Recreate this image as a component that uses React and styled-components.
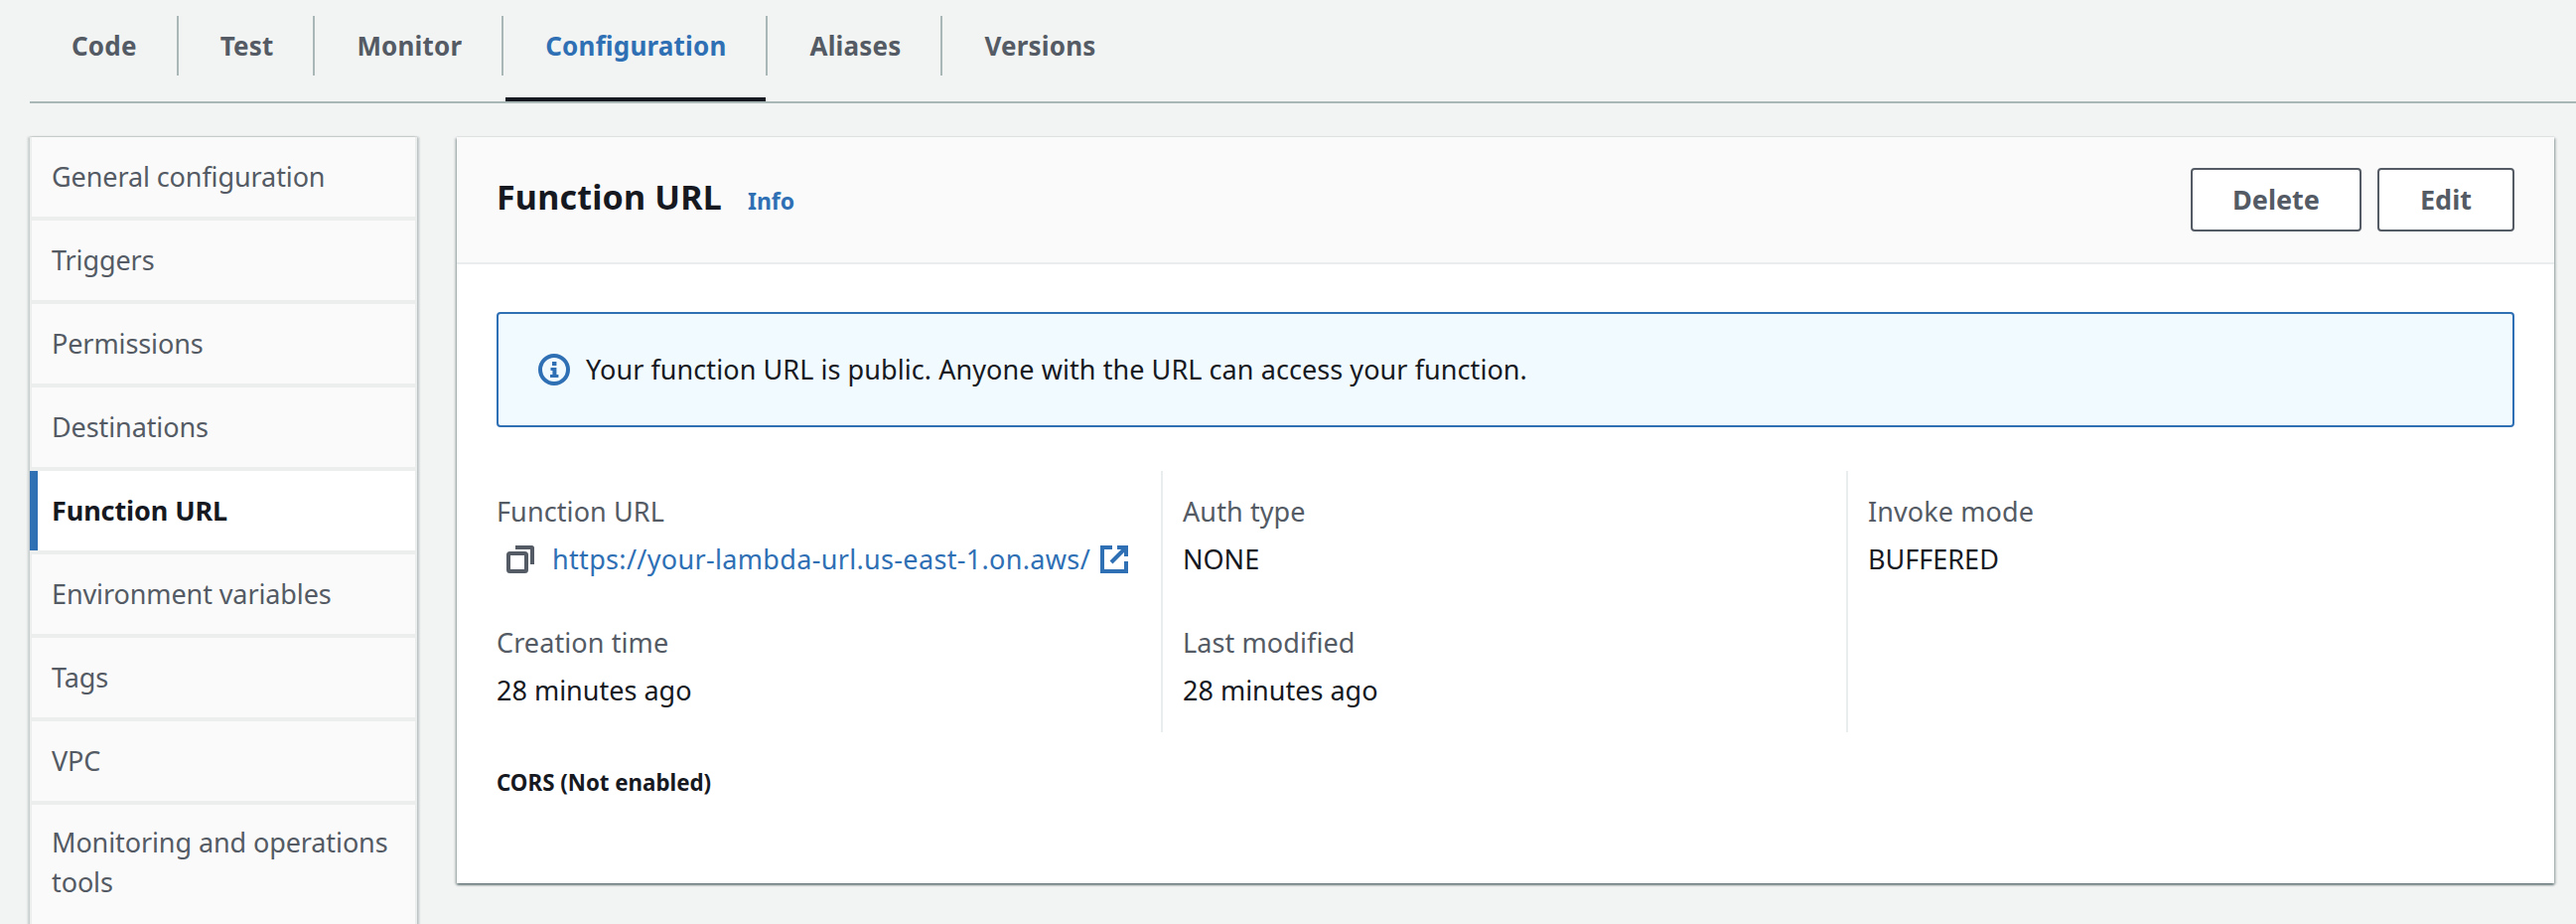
import React from "react";
import styled, { createGlobalStyle } from "styled-components";

const BLUE = "#2f70b5";
const GREY = "#545b64";
const INK = "#16191f";

const Global = createGlobalStyle`
  html, body { margin: 0; padding: 0; background: #f2f4f3; }
  body { font-family: "Noto Sans", "Open Sans", sans-serif; color: ${INK}; -webkit-font-smoothing: antialiased; }
`;

const Page = styled.div`
  width: 2594px;
  height: 930px;
  overflow: hidden;
  padding: 16px 0 0 30px;
  box-sizing: border-box;
`;

const TabBar = styled.div`
  display: flex;
  height: 86px;
  border-bottom: 2px solid #a9b7b6;
`;

const Tab = styled.div`
  position: relative;
  height: 60px;
  display: flex;
  align-items: center;
  padding: 0 40px 0 42px;
  font-size: 26px;
  font-weight: 700;
  letter-spacing: 0.18px;
  color: ${(p) => (p.$active ? BLUE : GREY)};
  border-right: ${(p) => (p.$last ? "none" : "2px solid #a9b7b6")};

  ${(p) =>
    p.$active &&
    `&::after {
      content: "";
      position: absolute;
      left: 2px;
      right: 0;
      top: 82px;
      height: 4px;
      background: ${INK};
    }`}
`;

const Body = styled.div`
  display: grid;
  grid-template-columns: 390px 2112px;
  column-gap: 40px;
  align-items: start;
  margin-top: 34px;
`;

const Nav = styled.nav`
  display: flex;
  flex-direction: column;
  gap: 4px;
  background: #eceeee;
  padding: 0 2px;
  box-shadow: 2px 0 2px rgba(0, 28, 36, 0.22), -2px 0 2px rgba(0, 28, 36, 0.18), 0 -1px 1px rgba(0, 28, 36, 0.06);
  height: 800px;
`;

const NavItem = styled.div`
  position: relative;
  min-height: ${(p) => (p.$tall ? 130 : 80)}px;
  box-sizing: border-box;
  display: flex;
  align-items: ${(p) => (p.$tall ? "flex-start" : "center")};
  padding: ${(p) => (p.$tall ? "18px 20px 0" : "0 20px 1px")};
  background: ${(p) => (p.$active ? "#ffffff" : "#fafafa")};
  font-size: 27px;
  line-height: 40px;
  letter-spacing: -0.1px;
  color: ${(p) => (p.$active ? INK : GREY)};
  font-weight: ${(p) => (p.$active ? 700 : 400)};

  ${(p) =>
    p.$active &&
    `&::before {
      content: "";
      position: absolute;
      left: -2px;
      top: 0;
      bottom: 0;
      width: 8px;
      background: ${BLUE};
    }`}
`;

const Panel = styled.section`
  background: #ffffff;
  height: 751px;
  box-shadow: 0 2px 2px rgba(0, 28, 36, 0.45), 2px 1px 2px rgba(0, 28, 36, 0.18), -2px 1px 2px rgba(0, 28, 36, 0.18), 0 -1px 1px rgba(0, 28, 36, 0.06);
`;

const PanelHeader = styled.header`
  display: flex;
  align-items: center;
  justify-content: space-between;
  height: 128px;
  box-sizing: border-box;
  padding: 0 40px;
  background: #fafafa;
  border-bottom: 2px solid #eaeded;
`;

const TitleRow = styled.div`
  display: flex;
  align-items: baseline;
  gap: 26px;
  padding-bottom: 6px;
`;

const Title = styled.h2`
  margin: 0;
  font-size: 34px;
  font-weight: 700;
  letter-spacing: 0.2px;
  color: ${INK};
`;

const InfoLink = styled.span`
  font-size: 23px;
  font-weight: 700;
  color: ${BLUE};
`;

const Actions = styled.div`
  display: flex;
  gap: 16px;
`;

const Button = styled.button`
  height: 64px;
  width: ${(p) => p.$w}px;
  box-sizing: border-box;
  border: 2px solid ${GREY};
  border-radius: 4px;
  background: #ffffff;
  color: ${GREY};
  font-family: inherit;
  font-size: 27px;
  font-weight: 700;
  padding: 0 0 2px;
`;

const PanelBody = styled.div`
  padding: 48px 40px 0;
`;

const Alert = styled.div`
  display: flex;
  align-items: center;
  gap: 16px;
  height: 116px;
  box-sizing: border-box;
  padding: 0 40px;
  background: #f1fafe;
  border: 2px solid ${BLUE};
  border-radius: 4px;
  font-size: 27px;
  letter-spacing: 0.07px;
  color: ${INK};
`;

const AlertText = styled.span`
  padding-bottom: 2px;
`;

const Columns = styled.div`
  display: grid;
  grid-template-columns: 669px 690px 1fr;
  margin-top: 44px;
  height: 263px;
`;

const Column = styled.div`
  display: flex;
  flex-direction: column;
  gap: 44px;
  padding: 21px 0 0 ${(p) => (p.$first ? 0 : 20)}px;
  border-left: ${(p) => (p.$first ? "none" : "2px solid #eaeded")};
`;

const Field = styled.div`
  display: flex;
  flex-direction: column;
  gap: 8px;
`;

const Label = styled.div`
  font-size: 27px;
  line-height: 40px;
  letter-spacing: 0.1px;
  color: ${GREY};
`;

const Value = styled.div`
  font-size: 27px;
  line-height: 40px;
  color: ${INK};
`;

const UrlRow = styled.div`
  display: flex;
  align-items: center;
  height: 40px;
  padding-left: 10px;
`;

const UrlLink = styled.a`
  font-size: 27px;
  line-height: 40px;
  letter-spacing: 0.33px;
  color: ${BLUE};
  margin: 0 10px 0 18px;
`;

const Cors = styled.div`
  margin-top: 31px;
  font-size: 22.3px;
  line-height: 40px;
  font-weight: 700;
  color: ${INK};
`;

const InfoIcon = () => (
  <svg width="32" height="32" viewBox="0 0 32 32" fill="none" aria-hidden="true">
    <circle cx="16" cy="16" r="14" stroke={BLUE} strokeWidth="4" />
    <rect x="14" y="8" width="4.4" height="4" fill={BLUE} />
    <path d="M12.5 14h5.9v7h2v3h-8.4v-3h2.4v-4h-1.9z" fill={BLUE} />
  </svg>
);

const CopyIcon = () => (
  <svg width="28" height="28" viewBox="0 0 28 28" fill="none" aria-hidden="true">
    <rect x="2" y="8" width="18" height="18" rx="1.5" stroke={GREY} strokeWidth="4" />
    <path d="M9 2h16.5a.5.5 0 0 1 .5.5V19" stroke={GREY} strokeWidth="4" />
  </svg>
);

const ExternalIcon = () => (
  <svg width="28" height="28" viewBox="0 0 28 28" fill="none" aria-hidden="true">
    <path d="M12 2H2v24h24V16" stroke={BLUE} strokeWidth="4" />
    <path d="M17 2h9v9" stroke={BLUE} strokeWidth="4" />
    <path d="M25 3 11 17" stroke={BLUE} strokeWidth="4" />
  </svg>
);

const tabs = ["Code", "Test", "Monitor", "Configuration", "Aliases", "Versions"];
const navItems = [
  "General configuration",
  "Triggers",
  "Permissions",
  "Destinations",
  "Function URL",
  "Environment variables",
  "Tags",
  "VPC",
  "Monitoring and operations tools",
];

export default function App() {
  return (
    <Page>
      <Global />
      <TabBar>
        {tabs.map((t) => (
          <Tab key={t} $active={t === "Configuration"} $last={t === "Versions"}>
            {t}
          </Tab>
        ))}
      </TabBar>
      <Body>
        <Nav>
          {navItems.map((n) => (
            <NavItem key={n} $active={n === "Function URL"} $tall={n.startsWith("Monitoring")}>
              <span>{n}</span>
            </NavItem>
          ))}
        </Nav>
        <Panel>
          <PanelHeader>
            <TitleRow>
              <Title>Function URL</Title>
              <InfoLink>Info</InfoLink>
            </TitleRow>
            <Actions>
              <Button $w={172}>Delete</Button>
              <Button $w={138}>Edit</Button>
            </Actions>
          </PanelHeader>
          <PanelBody>
            <Alert>
              <InfoIcon />
              <AlertText>Your function URL is public. Anyone with the URL can access your function.</AlertText>
            </Alert>
            <Columns>
              <Column $first>
                <Field>
                  <Label>Function URL</Label>
                  <UrlRow>
                    <CopyIcon />
                    <UrlLink>https://your-lambda-url.us-east-1.on.aws/</UrlLink>
                    <ExternalIcon />
                  </UrlRow>
                </Field>
                <Field>
                  <Label>Creation time</Label>
                  <Value>28 minutes ago</Value>
                </Field>
              </Column>
              <Column>
                <Field>
                  <Label>Auth type</Label>
                  <Value>NONE</Value>
                </Field>
                <Field>
                  <Label>Last modified</Label>
                  <Value>28 minutes ago</Value>
                </Field>
              </Column>
              <Column>
                <Field>
                  <Label>Invoke mode</Label>
                  <Value>BUFFERED</Value>
                </Field>
              </Column>
            </Columns>
            <Cors>CORS (Not enabled)</Cors>
          </PanelBody>
        </Panel>
      </Body>
    </Page>
  );
}
